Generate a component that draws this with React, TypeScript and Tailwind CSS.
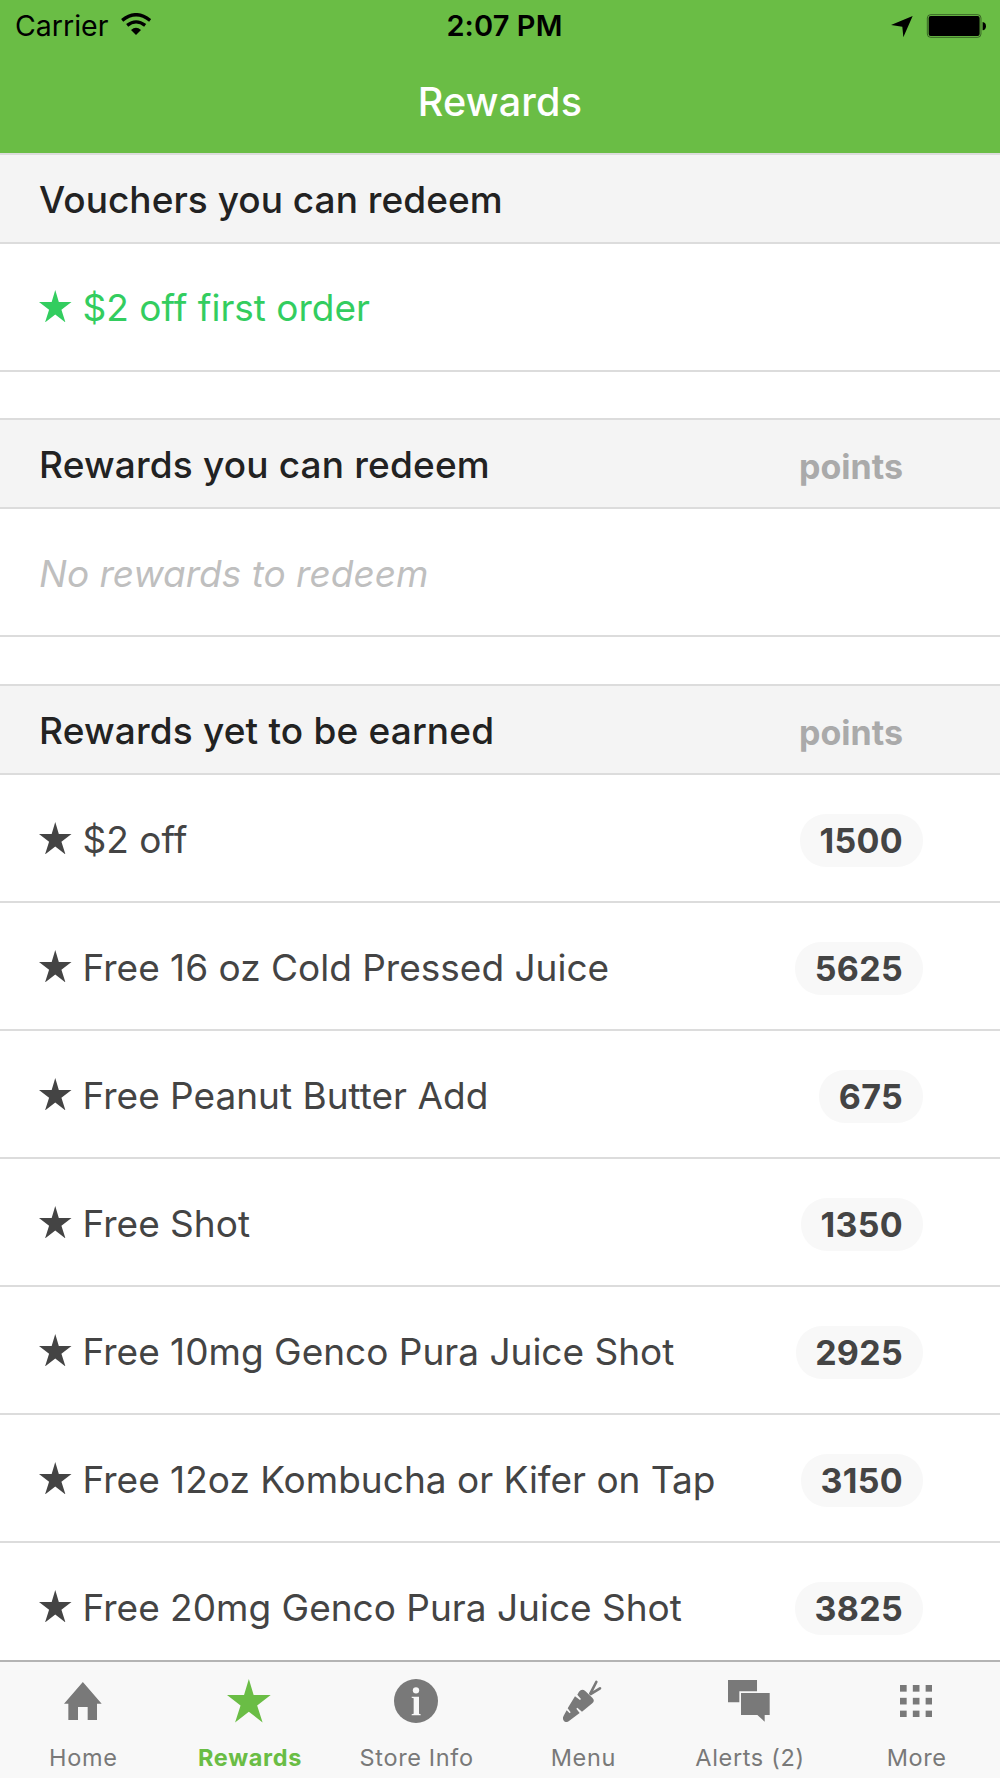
import React, { type ReactNode } from 'react';

const STAR_POINTS = '50,0 61,37 100,37 69,61 81.5,100 50,75 18.5,100 31,61 0,37 39,37';

function Star({ className }: { className: string }) {
  return (
    <svg viewBox="0 0 100 100" preserveAspectRatio="none" fill="currentColor" className={className}>
      <polygon points={STAR_POINTS} />
    </svg>
  );
}

function StatusBar() {
  return (
    <div className="grid h-[51px] grid-cols-3 items-center text-[29px] leading-[35px] text-black">
      <div className="flex items-center pl-[15px]">
        <span className="text-[28.5px]">Carrier</span>
        <svg viewBox="362 38 90 68" className="mb-[3px] ml-[12.5px] h-[22.7px] w-[30px]" fill="none" stroke="currentColor">
          <path d="M365.500 60 Q407 26 449.500 60" strokeWidth="10" />
          <path d="M380.500 75 Q407 54 434.500 75" strokeWidth="10" />
          <path d="M392 89 Q407 76 422 89 L407 104Z" fill="currentColor" stroke="none" />
        </svg>
      </div>
      <span className="pl-[9px] text-center font-semibold tracking-[0.1px]">2:07 PM</span>
      <svg viewBox="1174 38 286 72" className="mr-[13.3px] h-[24px] w-[95.3px] justify-self-end" fill="currentColor">
        <path d="M1239 44 L1211 108 L1208 76 L1174 71Z" />
        <rect x="1283" y="40" width="161" height="68" rx="10" fill="none" stroke="currentColor" strokeWidth="2" strokeOpacity="0.7" />
        <rect x="1287" y="44" width="153" height="60" rx="6" />
        <path d="M1449 62 Q1459 64 1459 74.5 Q1459 85 1449 87Z" />
      </svg>
    </div>
  );
}

function SectionHeader({ title, points }: { title: string; points?: boolean }) {
  return (
    <div className="flex h-[91px] items-center justify-between border-y-2 border-[#dcdcdc] bg-[#f4f4f4] pr-[77.5px] pl-[39px] text-[#222]">
      <h2 className={`text-[37px] leading-[45px] font-medium ${points ? 'pt-[2px] tracking-[0.18px]' : 'pt-px tracking-[0.04px]'}`}>{title}</h2>
      {points && (
        <span className="mt-[5px] px-[19.5px] text-[34px] leading-[53px] font-bold text-[#aaa]">points</span>
      )}
    </div>
  );
}

function Row({ children, badge, className }: { children: ReactNode; badge?: string; className: string }) {
  return (
    <div className={`flex h-32 items-center justify-between border-b-2 border-[#dcdcdc] pr-[77.5px] pl-[39px] text-[37px] leading-[45px] ${className}`}>
      {children}
      {badge && (
        <span className="mt-[2px] rounded-[26px] bg-[#f8f8f8] px-[19.5px] text-[34px] leading-[53px] font-bold tracking-[0.3px]">
          {badge}
        </span>
      )}
    </div>
  );
}

function StarLabel({ text }: { text: string }) {
  return (
    <div className="flex items-center">
      <Star className="mr-[11px] mb-[3px] h-[32.5px] w-[32.5px]" />
      <span>{text}</span>
    </div>
  );
}

const REWARDS: [string, string][] = [
  ['$2 off', '1500'],
  ['Free 16 oz Cold Pressed Juice', '5625'],
  ['Free Peanut Butter Add', '675'],
  ['Free Shot', '1350'],
  ['Free 10mg Genco Pura Juice Shot', '2925'],
  ['Free 12oz Kombucha or Kifer on Tap', '3150'],
  ['Free 20mg Genco Pura Juice Shot', '3825'],
];

const TABS: { label: string; active?: boolean; icon: ReactNode }[] = [
  {
    label: 'Home',
    icon: (
      <svg viewBox="192 96 113 114" className="mr-px h-[38px] w-[37.7px]" fill="currentColor">
        <path d="M248.500 96 L305 161 H291 V210 H263 V171 H234 V210 H205 V161 H192Z" />
      </svg>
    ),
  },
  { label: 'Rewards', active: true, icon: <Star className="mr-[1.5px] h-[43.5px] w-[43.7px]" /> },
  {
    label: 'Store Info',
    icon: (
      <svg viewBox="0 0 132 132" className="mr-px h-[44px] w-[44px]">
        <circle cx="66" cy="66" r="66" fill="currentColor" />
        <circle cx="66" cy="34" r="9.500" fill="#f8f8f8" />
        <path d="M53 53 H75 V104 L80 106 V109 H53 V106 L59 104 V58 L53 56Z" fill="#f8f8f8" />
      </svg>
    ),
  },
  {
    label: 'Menu',
    icon: (
      <svg viewBox="700 89 118 127" className="mr-px h-[42.3px] w-[39.3px]" fill="currentColor">
        <path d="M748 124 Q756 114 766 121 L788 142 Q797 151 788 159 L757 184 L743 172 L740 175 L750 188 L717 213 Q709 218 703 212 Q697 205 702 196 L711 180 L720 189 L723 186 L714 174 L736 138 L751 149 L754 146 L743 133Z" />
        <path d="M782 130 L800 95 M784 131 L811 114" fill="none" stroke="currentColor" strokeWidth="8" strokeLinecap="round" />
      </svg>
    ),
  },
  {
    label: 'Alerts (2)',
    icon: (
      <svg viewBox="205 90 125 125" className="mr-[1.5px] h-[41.7px] w-[41.7px]" fill="currentColor">
        <path d="M205 90 H292 V124 H239 V157 H205Z" />
        <path d="M244 129 H330 V195 H315 V215 L293 195 H244Z" />
      </svg>
    ),
  },
  {
    label: 'More',
    icon: (
      <svg viewBox="0 0 97 97" className="mr-[1.5px] h-[32.3px] w-[32.3px]" fill="currentColor">
        {[0, 38.5, 77].map((y) => [0, 38.5, 77].map((x) => <rect key={`${x}-${y}`} x={x} y={y} width="20" height="20" />))}
      </svg>
    ),
  },
];

function TabBar() {
  return (
    <nav className="grid h-[118px] shrink-0 grid-cols-6 border-t-2 border-[#b4b4b4] bg-[#f8f8f8]">
      {TABS.map((tab) => (
        <div key={tab.label} className={`flex flex-col items-center ${tab.active ? 'font-bold text-[#6abd45]' : 'text-[#797979]'}`}>
          <div className="flex h-[78px] items-center">{tab.icon}</div>
          <span className="mt-[3px] text-[23.5px] leading-[29px] tracking-[0.65px] whitespace-nowrap">{tab.label}</span>
        </div>
      ))}
    </nav>
  );
}

export default function App() {
  return (
    <div className="flex h-[1778px] w-[1000px] flex-col overflow-hidden bg-white font-['Inter',sans-serif]">
      <header className="h-[153px] shrink-0 bg-[#6abd45]">
        <StatusBar />
        <h1 className="pt-[27px] text-center text-[39.5px] leading-[48px] font-medium tracking-[0.2px] text-white">Rewards</h1>
      </header>
      <main className="min-h-0 flex-1 overflow-hidden">
        <SectionHeader title="Vouchers you can redeem" />
        <Row className="pt-px text-[#33cd5f]">
          <StarLabel text="$2 off first order" />
        </Row>
        <div className="mt-[46px]">
          <SectionHeader title="Rewards you can redeem" points />
          <Row className="pt-[3px] text-[#bfbfbf] italic">No rewards to redeem</Row>
        </div>
        <div className="mt-[47px]">
          <SectionHeader title="Rewards yet to be earned" points />
          {REWARDS.map(([label, badge]) => (
            <Row key={label} badge={badge} className="pt-[3px] text-[#444]">
              <StarLabel text={label} />
            </Row>
          ))}
        </div>
      </main>
      <TabBar />
    </div>
  );
}
